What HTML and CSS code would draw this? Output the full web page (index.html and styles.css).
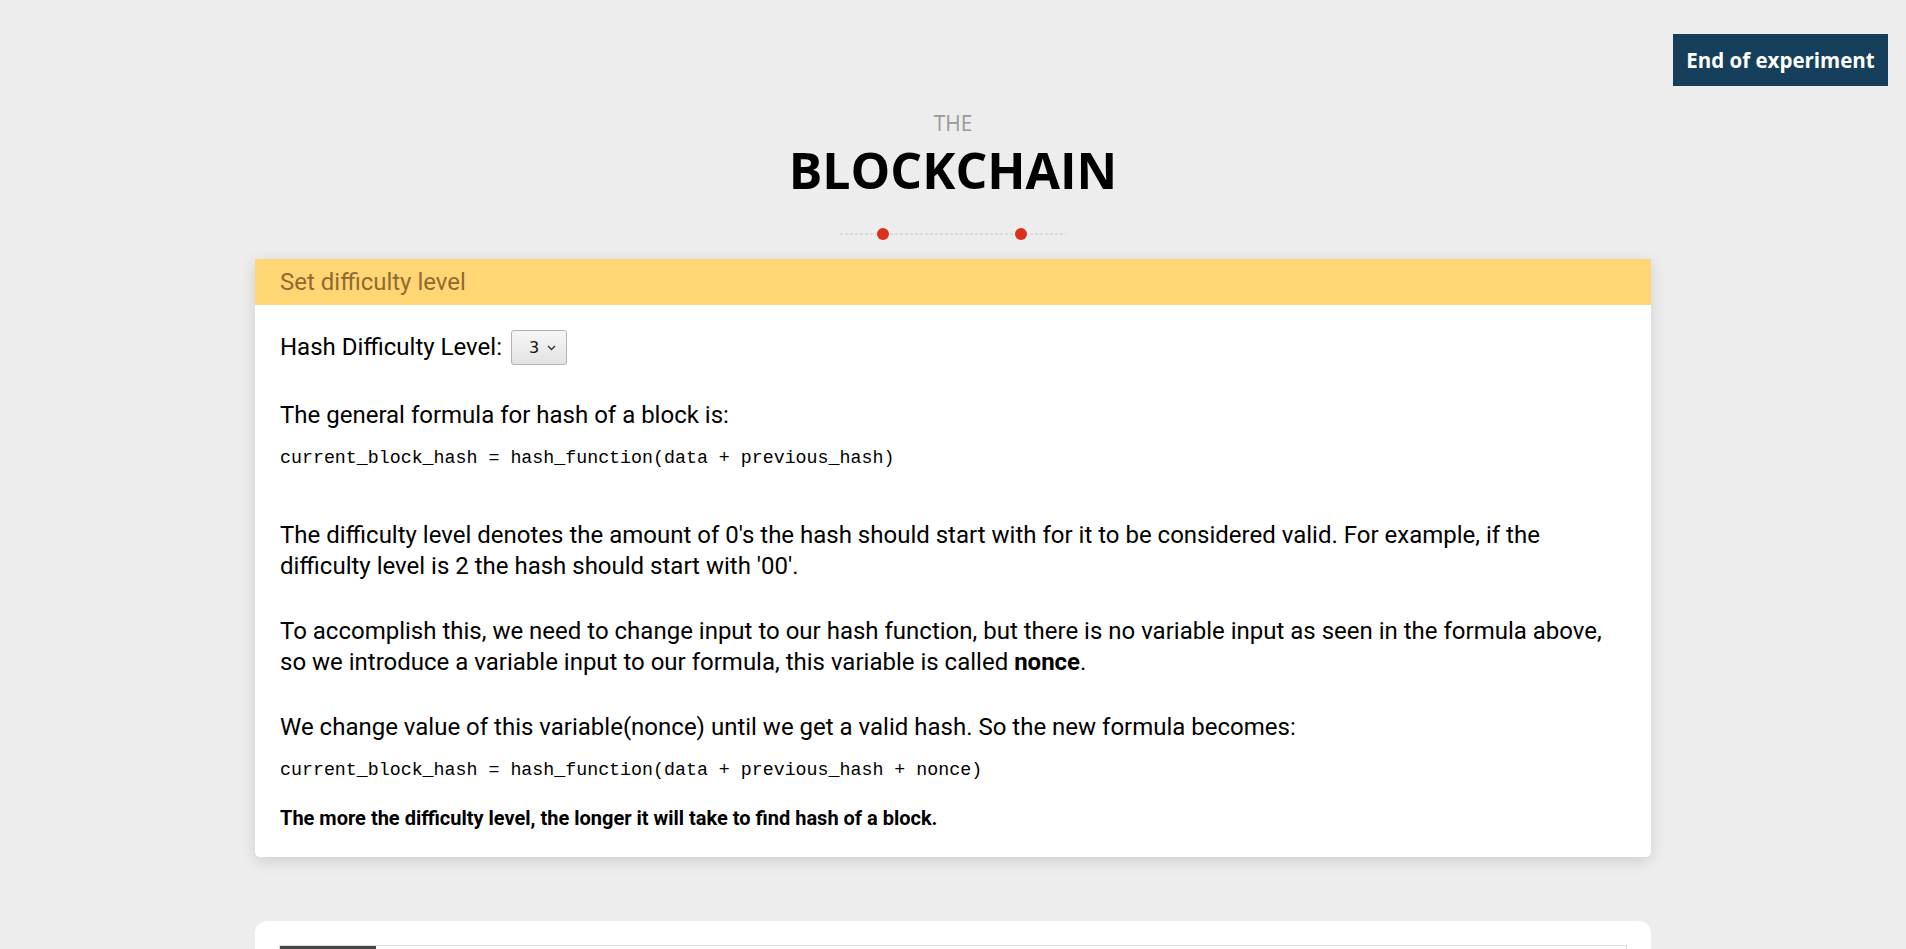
FILE: index.html
```html
<!DOCTYPE html>
<html lang="en">
<head>
<meta charset="utf-8">
<title>The Blockchain</title>
<link rel="stylesheet" href="styles.css">
</head>
<body>
<div class="topbar">
  <button class="end-btn" type="button">End of experiment</button>
</div>
<header class="title">
  <div class="title-small">THE</div>
  <h1 class="title-big">BLOCKCHAIN</h1>
  <div class="divider">
    <svg width="226" height="14" viewBox="0 0 226 14">
      <line x1="0" y1="7" x2="226" y2="7" stroke="#c9c9c9" stroke-width="1" stroke-dasharray="3 2"/>
      <circle cx="43" cy="7" r="6" fill="#d8321c"/>
      <circle cx="181" cy="7" r="6" fill="#d8321c"/>
    </svg>
  </div>
</header>

<section class="card">
  <div class="card-head">Set difficulty level</div>
  <div class="card-body">
    <div class="level-row">
      <label class="level-label" for="lvl">Hash Difficulty Level:</label>
      <div class="select-wrap">
        <select id="lvl" class="level-select">
          <option>1</option><option>2</option><option selected>3</option><option>4</option><option>5</option>
        </select>
        <svg class="chev" width="9" height="6" viewBox="0 0 9 6"><path d="M1 1 L4.5 4.5 L8 1" fill="none" stroke="#333" stroke-width="1.4"/></svg>
      </div>
    </div>
    <p class="txt t-first">The general formula for hash of a block is:</p>
    <div class="code c-first">current_block_hash = hash_function(data + previous_hash)</div>
    <p class="txt t-after-code">The difficulty level denotes the amount of 0's the hash should start with for it to be considered valid. For example, if the difficulty level is 2 the hash should start with '00'.</p>
    <p class="txt t-gap">To accomplish this, we need to change input to our hash function, but there is no variable input as seen in the formula above, so we introduce a variable input to our formula, this variable is called <b>nonce</b>.</p>
    <p class="txt t-gap">We change value of this variable(nonce) until we get a valid hash. So the new formula becomes:</p>
    <div class="code c-second">current_block_hash = hash_function(data + previous_hash + nonce)</div>
    <p class="note">The more the difficulty level, the longer it will take to find hash of a block.</p>
  </div>
</section>

<section class="card2">
  <div class="tabs">
    <div class="tab active">Block 1</div>
    <div class="tab-rest"></div>
  </div>
  <div class="tab-body"></div>
</section>
</body>
</html>
```

FILE: styles.css
```css
html, body {
  margin: 0;
  padding: 0;
}
body {
  background: #ededed;
  font-family: Roboto, "Liberation Sans", Arial, sans-serif;
  color: #000;
}
.topbar {
  display: flex;
  justify-content: flex-end;
  padding: 34px 18px 0 0;
}
.end-btn {
  background: #163f5c;
  color: #fff;
  border: 0;
  border-radius: 0;
  font-family: "Open Sans", "Liberation Sans", sans-serif;
  font-weight: 700;
  font-size: 20.5px;
  height: 52px;
  width: 215px;
  padding: 0;
  cursor: pointer;
}
.title {
  text-align: center;
  font-family: "Open Sans", "Liberation Sans", sans-serif;
}
.title-small {
  margin-top: 25px;
  font-size: 21px;
  line-height: 24px;
  color: #999;
}
.title-big {
  margin: 7px 0 0;
  font-size: 50px;
  line-height: 57px;
  font-weight: 700;
  color: #000;
}
.divider {
  display: flex;
  justify-content: center;
  margin-top: 28px;
  height: 14px;
}
.divider svg { display: block; }
.card {
  width: 1396px;
  margin: 18px auto 0;
  background: #fff;
  border-radius: 0 0 5px 5px;
  box-shadow: 0 4px 16px rgba(0,0,0,0.13);
}
.card-head {
  background: #fed674;
  height: 46px;
  line-height: 46px;
  padding: 0 25px;
  font-size: 24px;
  color: #94692f;
}
.card-body {
  padding: 25px 25px 26px;
}
.level-row {
  display: flex;
  align-items: center;
  gap: 9px;
  height: 35px;
}
.level-label {
  font-size: 24px;
  line-height: 31.5px;
}
.select-wrap {
  position: relative;
  width: 56px;
  height: 35px;
}
.level-select {
  appearance: none;
  -webkit-appearance: none;
  width: 56px;
  height: 35px;
  border: 1px solid #b3b3b3;
  border-radius: 3px;
  background: linear-gradient(#f6f6f6, #e3e3e3);
  font-family: "DejaVu Sans", sans-serif;
  font-size: 16px;
  padding: 0 0 0 17px;
  color: #111;
}
.chev {
  position: absolute;
  right: 11px;
  top: 15px;
  pointer-events: none;
}
.txt {
  margin: 0;
  font-size: 24px;
  line-height: 31.5px;
}
.t-first { margin-top: 35px; }
.t-after-code { margin-top: 50px; }
.t-gap { margin-top: 33px; }
.code {
  font-family: "Liberation Mono", "Courier New", monospace;
  font-size: 18.3px;
  line-height: 24px;
  white-space: pre;
  margin-top: 14px;
}
.c-second { margin-top: 15px; }
.note {
  margin: 23px 0 0;
  font-size: 20px;
  line-height: 26px;
  font-weight: 700;
}
.card2 {
  width: 1396px;
  margin: 64px auto 40px;
  background: #fff;
  border-radius: 12px;
  padding: 24px;
  box-sizing: border-box;
}
.tabs {
  display: flex;
  border: 1px solid #dcdcdc;
  height: 56px;
}
.tab {
  width: 96px;
  background: #444;
  color: #fff;
  font-size: 16px;
  line-height: 56px;
  text-align: center;
}
.tab-rest { flex: 1; }
.tab-body {
  height: 300px;
}
```
